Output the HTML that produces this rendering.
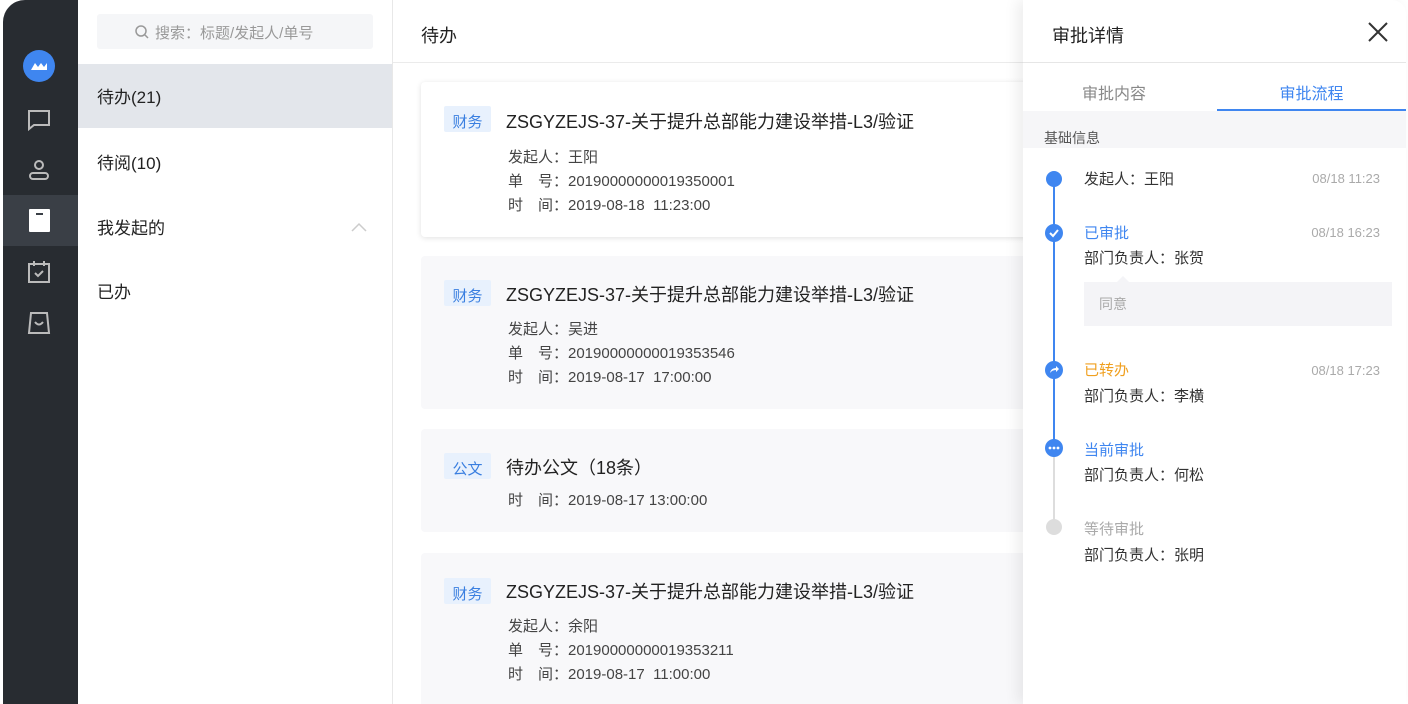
<!DOCTYPE html>
<html><head><meta charset="utf-8"><style>
*{margin:0;padding:0;box-sizing:border-box}
html,body{width:1408px;height:704px;overflow:hidden}
body{background:#fff;font-family:"Liberation Sans","Noto Sans CJK SC",sans-serif;position:relative;color:#222}
.abs{position:absolute}
.side{left:3px;top:0;width:75px;height:704px;background:#282c31;border-top-left-radius:22px}
.ic{position:absolute;left:23px}
.menu{left:78px;top:0;width:315px;height:704px;border-right:1px solid #e8e8e8}
.mi{position:absolute;left:0;width:314px;height:64px;line-height:68px;padding-left:19px;font-size:17px;color:#222}
.card{position:absolute;left:421px;width:620px;background:#f8f8fa;border-radius:4px;overflow:hidden}
.tag{position:absolute;left:23px;width:47px;height:26px;display:flex;align-items:center;justify-content:center;padding-top:4px;background:#e8f1fd;color:#3a7fe0;font-size:15px;border-radius:2px}
.tt{position:absolute;left:85px;font-size:18px;color:#222}
.ln{position:absolute;left:87px;font-size:15px;color:#444;line-height:24px}
.panel{left:1023px;top:0;width:383px;height:704px;background:#fff;box-shadow:-6px 0 14px rgba(0,0,0,.07);border-top-right-radius:14px}
.dot{position:absolute;left:22px;width:18px;height:18px;border-radius:50%;background:#3f86f0}
.tl{position:absolute;left:61px;font-size:15px}
.tm{position:absolute;right:26px;font-size:13px;color:#aaa}
</style></head><body>
<div class="abs side">
 <div class="abs" style="left:20px;top:50px;width:32px;height:32px;border-radius:50%;background:#3f86f0"><svg width="32" height="32"><path d="M8 20l4-7 3 4 3-4 3 4 3-4 0 7z" fill="#fff"/></svg></div>
 <svg class="ic" style="top:107px" width="26" height="26" fill="none" stroke="#bbb" stroke-width="2"><path d="M3 4h20v14H8l-5 4z"/></svg>
 <svg class="ic" style="top:157px" width="26" height="26" fill="none" stroke="#bbb" stroke-width="2"><circle cx="13" cy="8" r="4"/><rect x="4" y="16" width="18" height="6" rx="3"/></svg>
 <div class="abs" style="left:0;top:195px;width:75px;height:51px;background:#3a3f46"></div>
 <div class="abs" style="left:26px;top:209px;width:21px;height:23px;background:#fff;border-radius:1px"><div class="abs" style="left:7px;top:4px;width:7px;height:2px;background:#3a3f46"></div></div>
 <svg class="ic" style="top:259px" width="26" height="26" fill="none" stroke="#bbb" stroke-width="2"><rect x="3" y="5" width="20" height="18"/><path d="M8 2v5M18 2v5M9 14l3 3 5-5"/></svg>
 <svg class="ic" style="top:310px" width="26" height="26" fill="none" stroke="#bbb" stroke-width="2"><path d="M5 3h16l2 20H3z"/><path d="M9 12q4 5 8 0"/></svg>
</div>
<div class="abs menu">
 <div class="abs" style="left:19px;top:14px;width:276px;height:35px;background:#f5f6f8;border-radius:3px;color:#999;font-size:15px;line-height:39px;padding-left:58px">
  <svg class="abs" style="left:37px;top:10px" width="16" height="16" fill="none" stroke="#999" stroke-width="1.5"><circle cx="7" cy="7" r="5"/><path d="M11 11l3 3"/></svg>搜索：标题/发起人/单号</div>
 <div class="mi" style="top:64px;background:#e3e6eb">待办(21)</div>
 <div class="mi" style="top:130px">待阅(10)</div>
 <div class="mi" style="top:195px">我发起的<svg class="abs" style="left:272px;top:26px" width="18" height="12" fill="none" stroke="#ccc" stroke-width="1.5"><path d="M2 10l7-7 7 7"/></svg></div>
 <div class="mi" style="top:259px">已办</div>
</div>
<div class="abs" style="left:393px;top:0;width:630px;height:63px;border-bottom:1px solid #ebebeb"><div class="abs" style="left:28px;top:22px;font-size:18px">待办</div></div>
<div class="card" style="top:82px;height:155px;background:#fff;box-shadow:0 1px 6px rgba(0,0,0,.12)">
 <div class="tag" style="top:24px">财务</div><div class="tt" style="top:26px">ZSGYZEJS-37-关于提升总部能力建设举措-L3/验证</div>
 <div class="ln" style="top:64px">发起人：王阳<br>单　号：20190000000019350001<br>时　间：2019-08-18&nbsp; 11:23:00</div>
</div>
<div class="card" style="top:256px;height:153px">
 <div class="tag" style="top:24px">财务</div><div class="tt" style="top:25px">ZSGYZEJS-37-关于提升总部能力建设举措-L3/验证</div>
 <div class="ln" style="top:62px">发起人：吴进<br>单　号：20190000000019353546<br>时　间：2019-08-17&nbsp; 17:00:00</div>
</div>
<div class="card" style="top:429px;height:103px">
 <div class="tag" style="top:24px">公文</div><div class="tt" style="top:25px">待办公文（18条）</div>
 <div class="ln" style="top:60px">时　间：2019-08-17 13:00:00</div>
</div>
<div class="card" style="top:553px;height:151px;border-radius:4px 4px 0 0">
 <div class="tag" style="top:25px">财务</div><div class="tt" style="top:25px">ZSGYZEJS-37-关于提升总部能力建设举措-L3/验证</div>
 <div class="ln" style="top:62px">发起人：余阳<br>单　号：20190000000019353211<br>时　间：2019-08-17&nbsp; 11:00:00</div>
</div>
<div class="abs panel">
 <div class="abs" style="left:0;top:0;width:383px;height:63px;border-bottom:1px solid #e6e6e6"><div class="abs" style="left:29px;top:22px;font-size:18px">审批详情</div>
  <svg class="abs" style="left:344px;top:21px" width="22" height="22" stroke="#333" stroke-width="2"><path d="M2 2l18 18M20 2L2 20"/></svg></div>
 <div class="abs" style="left:0;top:80px;width:182px;text-align:center;font-size:16px;color:#888">审批内容</div>
 <div class="abs" style="left:194px;top:80px;width:189px;text-align:center;font-size:16px;color:#3f86f0">审批流程</div>
 <div class="abs" style="left:194px;top:109px;width:189px;height:2px;background:#3f86f0"></div>
 <div class="abs" style="left:0;top:111px;width:383px;height:37px;background:#f6f6f8;font-size:14px;color:#555;padding:17px 0 0 21px">基础信息</div>
 <div class="abs" style="left:30px;top:180px;width:2px;height:270px;background:#3f86f0"></div>
 <div class="abs" style="left:30px;top:450px;width:2px;height:78px;background:#ddd"></div>
 <div class="dot" style="top:171px;width:16px;height:16px;left:23px"></div>
 <div class="dot" style="top:224px"><svg width="18" height="18" fill="none" stroke="#fff" stroke-width="2"><path d="M5 9l3 3 5-6"/></svg></div>
 <div class="dot" style="top:361px"><svg width="18" height="18"><path d="M5 12q1-5 6-5V5l3 3-3 3V9q-4 0-6 3z" fill="#fff"/></svg></div>
 <div class="dot" style="top:439px"><svg width="18" height="18" fill="#fff"><circle cx="5" cy="9" r="1.4"/><circle cx="9" cy="9" r="1.4"/><circle cx="13" cy="9" r="1.4"/></svg></div>
 <div class="dot" style="top:519px;width:16px;height:16px;left:23px;background:#ddd"></div>
 <div class="tl" style="top:168px;color:#333">发起人：王阳</div><div class="tm" style="top:171px">08/18 11:23</div>
 <div class="tl" style="top:222px;color:#3f86f0">已审批</div><div class="tm" style="top:225px">08/18 16:23</div>
 <div class="tl" style="top:247px;color:#333">部门负责人：张贺</div>
 <div class="abs" style="left:61px;top:282px;width:308px;height:44px;background:#f4f4f7;color:#aaa;font-size:14px;line-height:44px;padding-left:15px">同意</div>
 <div class="abs" style="left:94px;top:276px;width:0;height:0;border:6px solid transparent;border-bottom-color:#f4f4f7;border-top:0"></div>
 <div class="tl" style="top:359px;color:#f0a020">已转办</div><div class="tm" style="top:363px">08/18 17:23</div>
 <div class="tl" style="top:385px;color:#333">部门负责人：李横</div>
 <div class="tl" style="top:439px;color:#3f86f0">当前审批</div>
 <div class="tl" style="top:464px;color:#333">部门负责人：何松</div>
 <div class="tl" style="top:518px;color:#aaa">等待审批</div>
 <div class="tl" style="top:544px;color:#333">部门负责人：张明</div>
</div>
</body></html>
